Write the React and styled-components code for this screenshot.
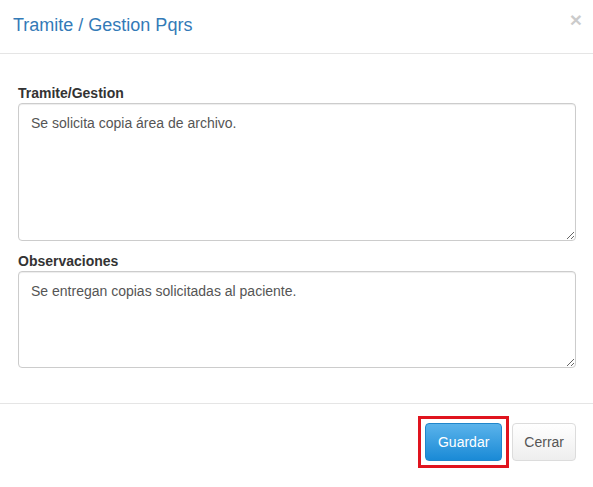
import React from "react";
import styled, { createGlobalStyle } from "styled-components";

const Global = createGlobalStyle`
  html, body { margin: 0; padding: 0; background: #fff; }
  body { font-family: "Liberation Sans", Arial, sans-serif; font-size: 14px; color: #333; }
  * { box-sizing: border-box; }
`;

const Modal = styled.div`
  width: 593px;
  height: 487px;
  background: #fff;
  display: flex;
  flex-direction: column;
`;

const Header = styled.div`
  display: flex;
  align-items: flex-start;
  justify-content: space-between;
  padding: 11px 13px 14px 13px;
  border-bottom: 1px solid #e5e5e5;
`;

const Title = styled.h4`
  margin: 0;
  font-size: 18px;
  font-weight: normal;
  line-height: 28px;
  color: #337ab7;
`;

const Close = styled.button`
  border: 0;
  background: transparent;
  padding: 0;
  margin: -2px -2px 0 0;
  font-family: "Liberation Sans", Arial, sans-serif;
  font-size: 21px;
  font-weight: bold;
  line-height: 21px;
  color: #000;
  opacity: 0.2;
  cursor: pointer;
`;

const Body = styled.div`
  padding: 29px 17px 35px 18px;
  display: flex;
  flex-direction: column;
  gap: 10px;
`;

const Group = styled.div`
  display: flex;
  flex-direction: column;
`;

const Label = styled.label`
  font-weight: bold;
  font-size: 14px;
  line-height: 20px;
  color: #333;
`;

const TextArea = styled.textarea`
  display: block;
  width: 100%;
  height: ${(p) => p.$h}px;
  padding: 9px 12px 6px;
  border: 1px solid #ccc;
  border-radius: 4px;
  box-shadow: inset 0 1px 1px rgba(0, 0, 0, 0.075);
  font-family: "Liberation Sans", Arial, sans-serif;
  font-size: 14px;
  line-height: 20px;
  color: #555;
  resize: vertical;
  outline: none;
  margin: 0;
`;

const Footer = styled.div`
  border-top: 1px solid #e5e5e5;
  padding: 12px 17px 18px 15px;
  display: flex;
  justify-content: flex-end;
  align-items: center;
  gap: 3px;
`;

const Highlight = styled.span`
  display: inline-flex;
  border: 3px solid #e0141e;
  padding: 4px;
`;

const Button = styled.button`
  font-family: "Liberation Sans", Arial, sans-serif;
  font-size: 14px;
  line-height: 20px;
  padding: 8px ${(p) => (p.$primary ? 12 : 11)}px;
  border-radius: 4px;
  cursor: pointer;
  border: 1px solid ${(p) => (p.$primary ? "#1f86cb" : "#dcdcdc")};
  color: ${(p) => (p.$primary ? "#fff" : "#555")};
  background: ${(p) =>
    p.$primary
      ? "linear-gradient(to bottom, #5ab3eb 0%, #1a8ad6 100%)"
      : "linear-gradient(to bottom, #ffffff 0%, #eeeeee 100%)"};
`;

export default function App() {
  return (
    <>
      <Global />
      <Modal>
        <Header>
          <Title>Tramite / Gestion Pqrs</Title>
          <Close aria-label="Close">×</Close>
        </Header>
        <Body>
          <Group>
            <Label>Tramite/Gestion</Label>
            <TextArea $h={138} defaultValue="Se solicita copia área de archivo." />
          </Group>
          <Group>
            <Label>Observaciones</Label>
            <TextArea $h={97} defaultValue="Se entregan copias solicitadas al paciente." />
          </Group>
        </Body>
        <Footer>
          <Highlight>
            <Button $primary>Guardar</Button>
          </Highlight>
          <Button>Cerrar</Button>
        </Footer>
      </Modal>
    </>
  );
}
